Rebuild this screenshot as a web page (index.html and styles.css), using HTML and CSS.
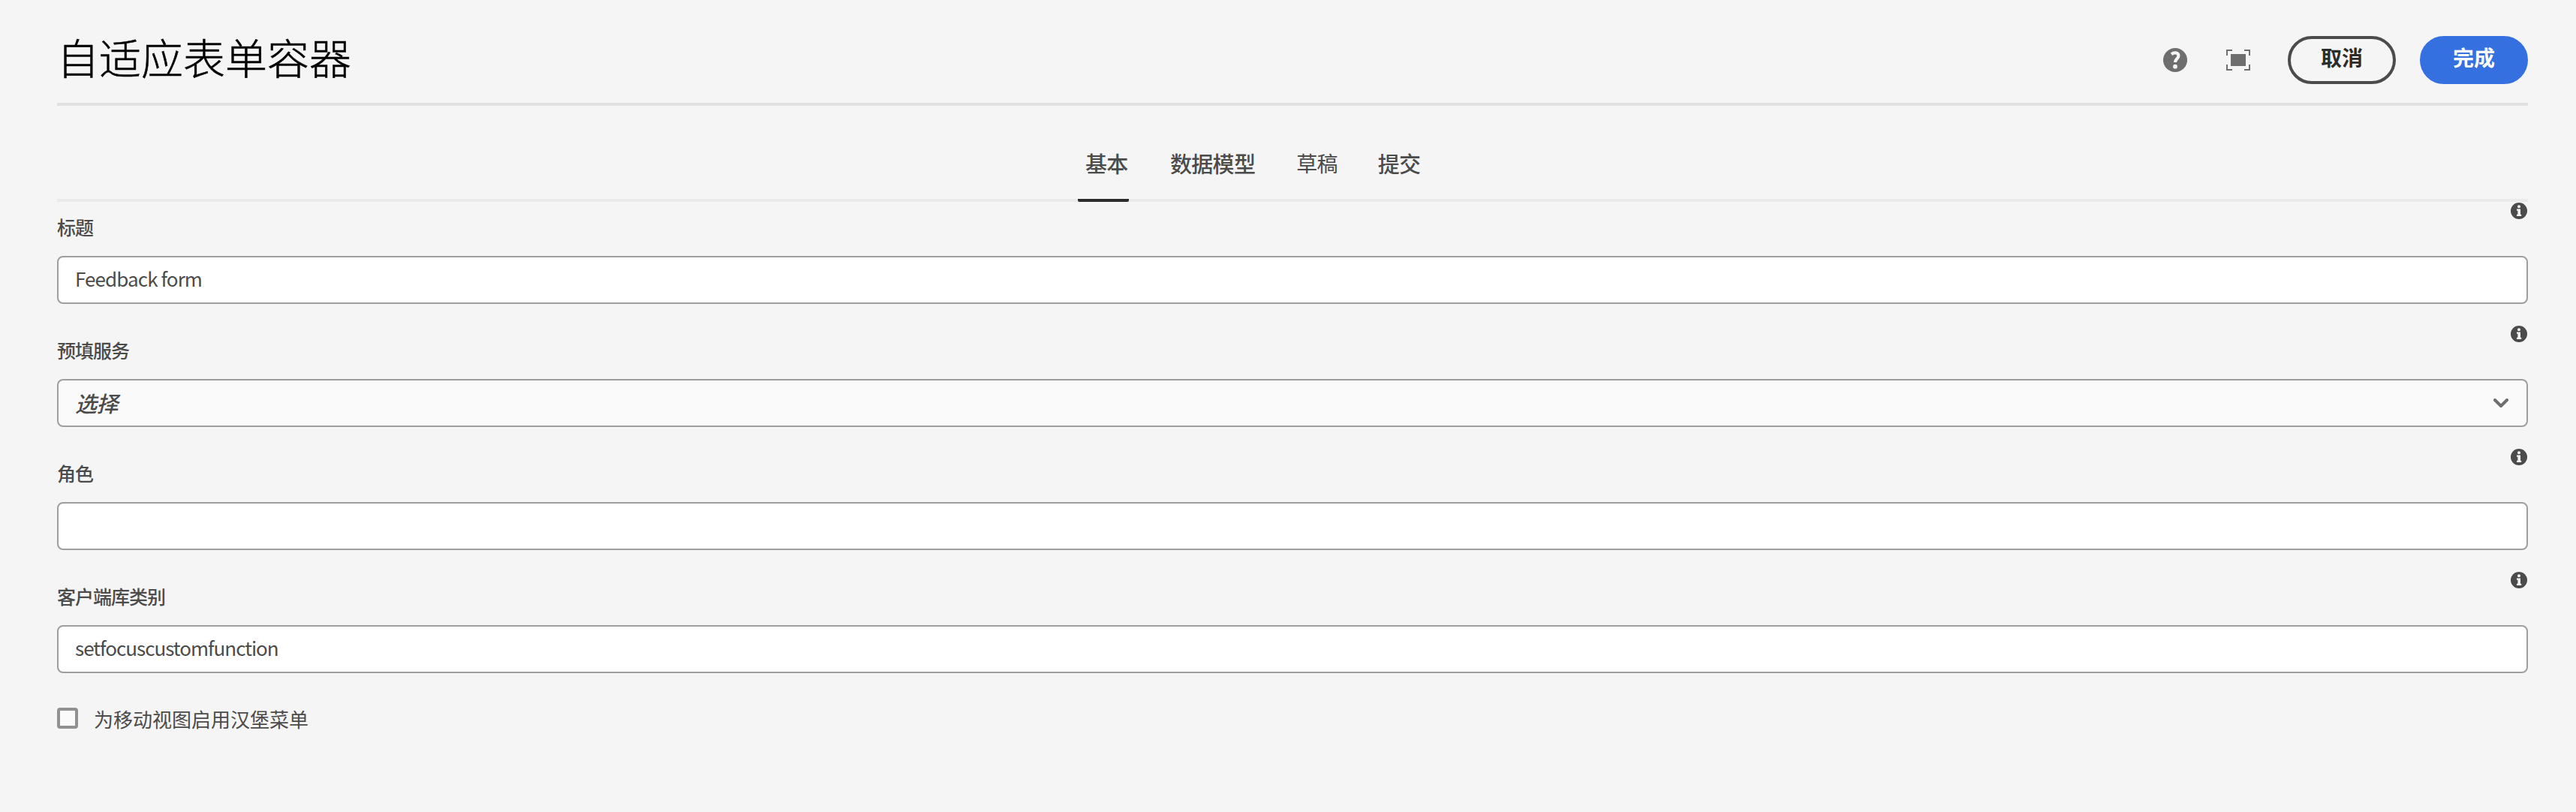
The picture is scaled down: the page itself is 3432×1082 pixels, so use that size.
FILE: index.html
```html
<!DOCTYPE html>
<html lang="zh-CN">
<head>
<meta charset="utf-8">
<title>自适应表单容器</title>
<link rel="stylesheet" href="styles.css">
</head>
<body>
<svg class="sprite" aria-hidden="true">
  <symbol id="info" viewBox="0 0 22 22">
    <circle cx="11" cy="11" r="11" fill="#4b4b4b"/>
    <circle cx="11" cy="5.2" r="2" fill="#f5f5f5"/>
    <path d="M8 8.5h5v7.3h1.2V18H8v-2.2h1.4v-5H8z" fill="#f5f5f5"/>
  </symbol>
</svg>
<main class="dialog">
  <header class="header">
    <h1 class="title">自适应表单容器</h1>
    <div class="actions">
      <svg class="icon help" viewBox="0 0 32 32"><circle cx="16" cy="16" r="16" fill="#6e6e6e"/><path d="M11 8.200C15.500 5 20.400 6.300 20.400 10.400c0 4-4.600 4.300-4.400 8.600" fill="none" stroke="#f5f5f5" stroke-width="4.200"/><circle cx="16" cy="24.700" r="2.900" fill="#f5f5f5"/></svg>
      <svg class="icon full" viewBox="0 0 32 28" fill="#6e6e6e"><path d="M6 6h20v16H6zM0 0h8v2H2v6H0zM24 0h8v8h-2V2h-6zM0 20h2v6h6v2H0zM30 20h2v8h-8v-2h6z"/></svg>
      <button class="button cancel">取消</button>
      <button class="button done">完成</button>
    </div>
  </header>
  <nav class="tabs">
    <a class="tab active">基本</a>
    <a class="tab">数据模型</a>
    <a class="tab draft">草稿</a>
    <a class="tab">提交</a>
  </nav>
  <form class="form">
    <div class="field">
      <div class="row"><label class="label">标题</label><svg class="info"><use href="#info"/></svg></div>
      <div class="control"><span class="value feedback">Feedback form</span></div>
    </div>
    <div class="field">
      <div class="row"><label class="label">预填服务</label><svg class="info"><use href="#info"/></svg></div>
      <div class="control select"><span class="placeholder">选择</span><svg class="chevron" viewBox="0 0 20 13"><path d="M2 2l8 8 8-8" fill="none" stroke="#6e6e6e" stroke-width="4" stroke-linecap="round" stroke-linejoin="round"/></svg></div>
    </div>
    <div class="field">
      <div class="row"><label class="label">角色</label><svg class="info"><use href="#info"/></svg></div>
      <div class="control"></div>
    </div>
    <div class="field">
      <div class="row"><label class="label">客户端库类别</label><svg class="info"><use href="#info"/></svg></div>
      <div class="control"><span class="value">setfocuscustomfunction</span></div>
    </div>
    <label class="check"><span class="box"></span><span class="check-text">为移动视图启用汉堡菜单</span></label>
  </form>
</main>
</body>
</html>
```
FILE: styles.css
```css
* { box-sizing: border-box; }
body {
  margin: 0;
  background: #f5f5f5;
  color: #4b4b4b;
  font-family: "Noto Sans CJK SC", sans-serif;
}
.sprite { display: none; }
.dialog { height: 1082px; padding: 0 64px 0 76px; }
.header {
  display: flex;
  justify-content: space-between;
  height: 141px;
  border-bottom: 4px solid #e1e1e1;
}
.title {
  margin: 0;
  font-size: 56px;
  font-weight: 300;
  -webkit-text-stroke: 0.5px #000;
  line-height: 80px;
  padding-top: 35px;
  color: #000;
}
.actions { display: flex; align-items: center; height: 64px; margin-top: 48px; }
.icon.help { width: 32px; height: 32px; margin-right: 52px; }
.icon.full { width: 32px; height: 28px; margin-right: 50px; }
.button {
  width: 144px;
  height: 64px;
  padding: 0 0 8px;
  border: 4px solid #4b4b4b;
  border-radius: 32px;
  background: transparent;
  color: #2c2c2c;
  font: 700 28px/40px "Noto Sans CJK SC", sans-serif;
}
.button.done { margin-left: 32px; border-color: #3470e0; background: #3470e0; color: #fff; }
.tabs {
  display: flex;
  gap: 55px;
  height: 128px;
  padding-left: 1370px;
  border-bottom: 4px solid #eaeaea;
}
.tab { height: 128px; padding-top: 56px; font-size: 29px; line-height: 40px; font-weight: 500; letter-spacing: -0.7px; }
.tab.active { width: 68px; padding-left: 10px; margin-left: -10px; border-bottom: 4px solid #2c2c2c; border-radius: 2px; }
.tab.draft { margin-right: -1px; font-size: 28px; font-weight: 400; }
.form { display: flex; flex-direction: column; }
.field { height: 164px; }
.row { display: flex; justify-content: space-between; height: 72px; padding-right: 1px; }
.label { padding-top: 15px; font-size: 25px; line-height: 36px; font-weight: 500; letter-spacing: -1px; }
.info { width: 22px; height: 22px; margin-top: 1px; }
.control {
  display: flex;
  align-items: center;
  justify-content: space-between;
  height: 64px;
  padding: 0 24px 0 22px;
  border: 2px solid #9e9e9e;
  border-radius: 8px;
  background: #fff;
}
.select { background: #fafafa; }
.value { font-size: 26px; line-height: 40px; padding-bottom: 5px; letter-spacing: -1px; }
.value.feedback { letter-spacing: -0.9px; }
.placeholder { padding-bottom: 3px; font-size: 29px; line-height: 40px; font-style: italic; font-weight: 500; letter-spacing: -0.5px; }
.chevron { width: 20px; height: 13px; }
.check { display: flex; align-items: center; gap: 21px; margin-top: 2px; height: 60px; }
.box { width: 28px; height: 28px; border: 4px solid #919191; border-radius: 4px; background: #fafafa; }
.check-text { padding-top: 2px; font-size: 26px; line-height: 40px; }
```
